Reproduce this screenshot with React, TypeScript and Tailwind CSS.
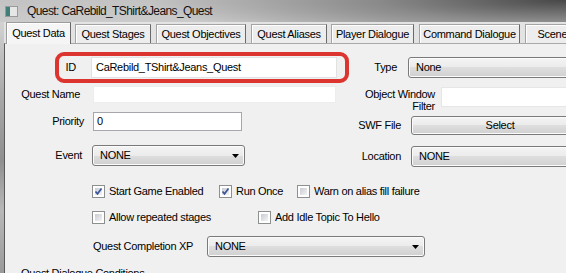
import React from "react";

function Arrow() {
  return (
    <svg width="7" height="4" viewBox="0 0 7 4" className="shrink-0">
      <path d="M0 0h7L3.5 4z" fill="#000" />
    </svg>
  );
}

function Combo({ value, className, arrow = true }: { value: string; className: string; arrow?: boolean }) {
  return (
    <div
      className={`flex items-center rounded-[3px] border border-[#7a7a7a] bg-[linear-gradient(#f4f4f4,#ebebeb_50%,#dedede_50%,#d0d0d0)] pl-[7px] pr-[5px] shadow-[inset_0_0_0_1px_#fbfbfb] ${className}`}
    >
      <span className="flex-1">{value}</span>
      {arrow && <Arrow />}
    </div>
  );
}

function Check({ checked, label, className = "" }: { checked?: boolean; label: string; className?: string }) {
  return (
    <div className={`flex items-center h-[13px] shrink-0 ${className}`}>
      <div className="w-[13px] h-[13px] border border-[#8e8f8f] bg-white p-[2px] shrink-0">
        <div className="relative w-full h-full bg-[linear-gradient(135deg,#c7cbd1,#f4f4f4)]">
          {checked && (
            <svg width="9" height="9" viewBox="0 0 9 9" className="absolute -left-[1px] -top-[1px]">
              <path d="M1.5 4.5l2 2.3L7.5 1.5" fill="none" stroke="#3d5599" strokeWidth="1.7" />
            </svg>
          )}
        </div>
      </div>
      <span className="ml-[4px] whitespace-nowrap">{label}</span>
    </div>
  );
}

const tabs = [
  { name: "Quest Data", w: "w-[65px]", ml: "ml-[2px]" },
  { name: "Quest Stages", w: "w-[76px]", ml: "ml-[4px]" },
  { name: "Quest Objectives", w: "w-[90px]", ml: "ml-[5px]" },
  { name: "Quest Aliases", w: "w-[76px]", ml: "ml-[5px]" },
  { name: "Player Dialogue", w: "w-[83px]", ml: "ml-[4px]" },
  { name: "Command Dialogue", w: "w-[101px]", ml: "ml-[5px]" },
  { name: "Scenes", w: "w-[60px]", ml: "ml-[5px]" },
];

export default function App() {
  return (
    <div className="relative w-[566px] h-[273px] overflow-hidden bg-[#f0f0f0] font-['Liberation_Sans',Arial,sans-serif] text-[11px] tracking-[-0.3px] leading-none text-black">
      {/* Title bar */}
      <div className="h-[22px] flex items-center bg-[radial-gradient(ellipse_420px_46px_at_100%_0%,#474747_0%,#8a8a8a_45%,rgba(200,200,200,0)_100%),linear-gradient(#c3c3c3,#cbcbcb)]">
        <svg width="13" height="11" viewBox="0 0 13 11" className="ml-[5px]">
          <rect x="0.5" y="0.5" width="12" height="10" fill="#e6e6e6" stroke="#9a9a9a" />
          <rect x="1" y="1" width="4" height="9" fill="#3f7f78" />
        </svg>
        <span className="ml-[9px] text-[12px] tracking-[-0.6px] text-[#111]">Quest: CaRebild_TShirt&amp;Jeans_Quest</span>
      </div>

      <div className="flex h-[251px]">
        {/* left frame */}
        <div className="w-[4px] shrink-0 bg-[linear-gradient(#d2d2d2,#a8a8a8_30%,#8f8f8f_55%,#b8b8b8_75%,#9a9a9a)]" />

        <div className="flex-1 min-w-0 flex flex-col">
          {/* Tabs */}
          <div className="h-[23px] flex items-end bg-[#e3e3e3]">
            {tabs.map((t, i) =>
              i === 0 ? (
                <div
                  key={t.name}
                  className={`${t.w} ${t.ml} shrink-0 relative z-10 -mb-px h-[22px] flex items-center justify-center border border-b-0 border-[#9c9c9c] border-r-[#6a6a6a] bg-[#f5f5f5] shadow-[inset_1px_1px_0_#fff] whitespace-nowrap`}
                >
                  {t.name}
                </div>
              ) : (
                <div
                  key={t.name}
                  className={`${t.w} ${t.ml} shrink-0 h-[19px] flex items-center justify-center border border-b-0 border-[#a4a4a4] border-r-[#6a6a6a] bg-[#ededed] shadow-[inset_1px_1px_0_#fff] whitespace-nowrap`}
                >
                  {t.name}
                </div>
              )
            )}
          </div>

          {/* Panel */}
          <div className="flex-1 flex flex-col border-t border-l border-[#a9a9a9] border-l-[#5a5a5a] bg-[#f0f0f0]">
            {/* ID / Type */}
            <div className="mt-[13px] flex h-[21px]">
              <div className="w-[345px] shrink-0 flex">
                <div className="w-[86px] flex items-center justify-end pr-[15px]">ID</div>
                <div className="w-[246px] h-[21px] flex items-center pl-[4px] bg-white border border-[#e2e2e2]">
                  CaRebild_TShirt&amp;Jeans_Quest
                </div>
              </div>
              <div className="w-[58px] shrink-0 flex items-center justify-end pr-[11px]">Type</div>
              <Combo value="None" arrow={false} className="w-[180px] h-[21px] shrink-0" />
            </div>

            {/* Quest Name / Object Window Filter */}
            <div className="mt-[8px] flex h-[21px]">
              <div className="w-[345px] shrink-0 flex h-[17px]">
                <div className="w-[88px] flex items-center justify-end pr-[13px]">Quest Name</div>
                <div className="w-[243px] h-[17px] bg-white border border-[#ededed]" />
              </div>
              <div className="w-[91px] shrink-0 h-[21px] flex flex-col items-end pr-[6px] pt-[3px] gap-[2px] leading-[10px]">
                <span className="whitespace-nowrap">Object Window</span>
                <span>Filter</span>
              </div>
              <div className="mt-[1px] w-[140px] h-[20px] shrink-0 bg-white border border-[#e6e6e6]" />
            </div>

            {/* Priority / SWF File */}
            <div className="mt-[5px] flex">
              <div className="w-[345px] shrink-0 flex h-[19px]">
                <div className="w-[88px] flex items-center justify-end pr-[9px]">Priority</div>
                <div className="w-[149px] h-[19px] flex items-center pl-[3px] bg-white border border-[#a5a7ad]">0</div>
              </div>
              <div className="w-[61px] shrink-0 mt-[4px] h-[19px] flex items-center justify-end pr-[10px] whitespace-nowrap">SWF File</div>
              <div className="mt-[4px] w-[178px] h-[19px] shrink-0 flex items-center justify-center rounded-[3px] border border-[#7a7a7a] bg-[linear-gradient(#f4f4f4,#ebebeb_50%,#dedede_50%,#d0d0d0)] shadow-[inset_0_0_0_1px_#fbfbfb]">
                Select
              </div>
            </div>

            {/* Event / Location */}
            <div className="mt-[10px] flex">
              <div className="w-[345px] shrink-0 flex h-[21px]">
                <div className="w-[87px] flex items-center justify-end pr-[10px]">Event</div>
                <Combo value="NONE" className="w-[153px] h-[21px]" />
              </div>
              <div className="w-[61px] shrink-0 mt-[1px] h-[21px] flex items-center justify-end pr-[10px]">Location</div>
              <Combo value="NONE" arrow={false} className="mt-[1px] w-[178px] h-[21px] shrink-0" />
            </div>

            {/* Checkbox rows */}
            <div className="mt-[18px] flex pl-[87px]">
              <Check checked label="Start Game Enabled" className="w-[127px]" />
              <Check checked label="Run Once" className="w-[78px]" />
              <Check label="Warn on alias fill failure" />
            </div>
            <div className="mt-[13px] flex pl-[87px]">
              <Check label="Allow repeated stages" className="w-[166px]" />
              <Check label="Add Idle Topic To Hello" />
            </div>

            {/* Quest Completion XP */}
            <div className="mt-[12px] flex items-center pl-[88px]">
              <span className="w-[114px] shrink-0 whitespace-nowrap">Quest Completion XP</span>
              <Combo value="NONE" className="w-[218px] h-[21px] shrink-0" />
            </div>

            <div className="mt-[11px] pl-[16px] whitespace-nowrap">Quest Dialogue Conditions</div>
          </div>
        </div>
      </div>

      {/* Red annotation highlight */}
      <div className="absolute left-[55px] top-[52px] w-[294px] h-[31px] rounded-[9px] border-[4px] border-[#dc3530]" />
    </div>
  );
}
